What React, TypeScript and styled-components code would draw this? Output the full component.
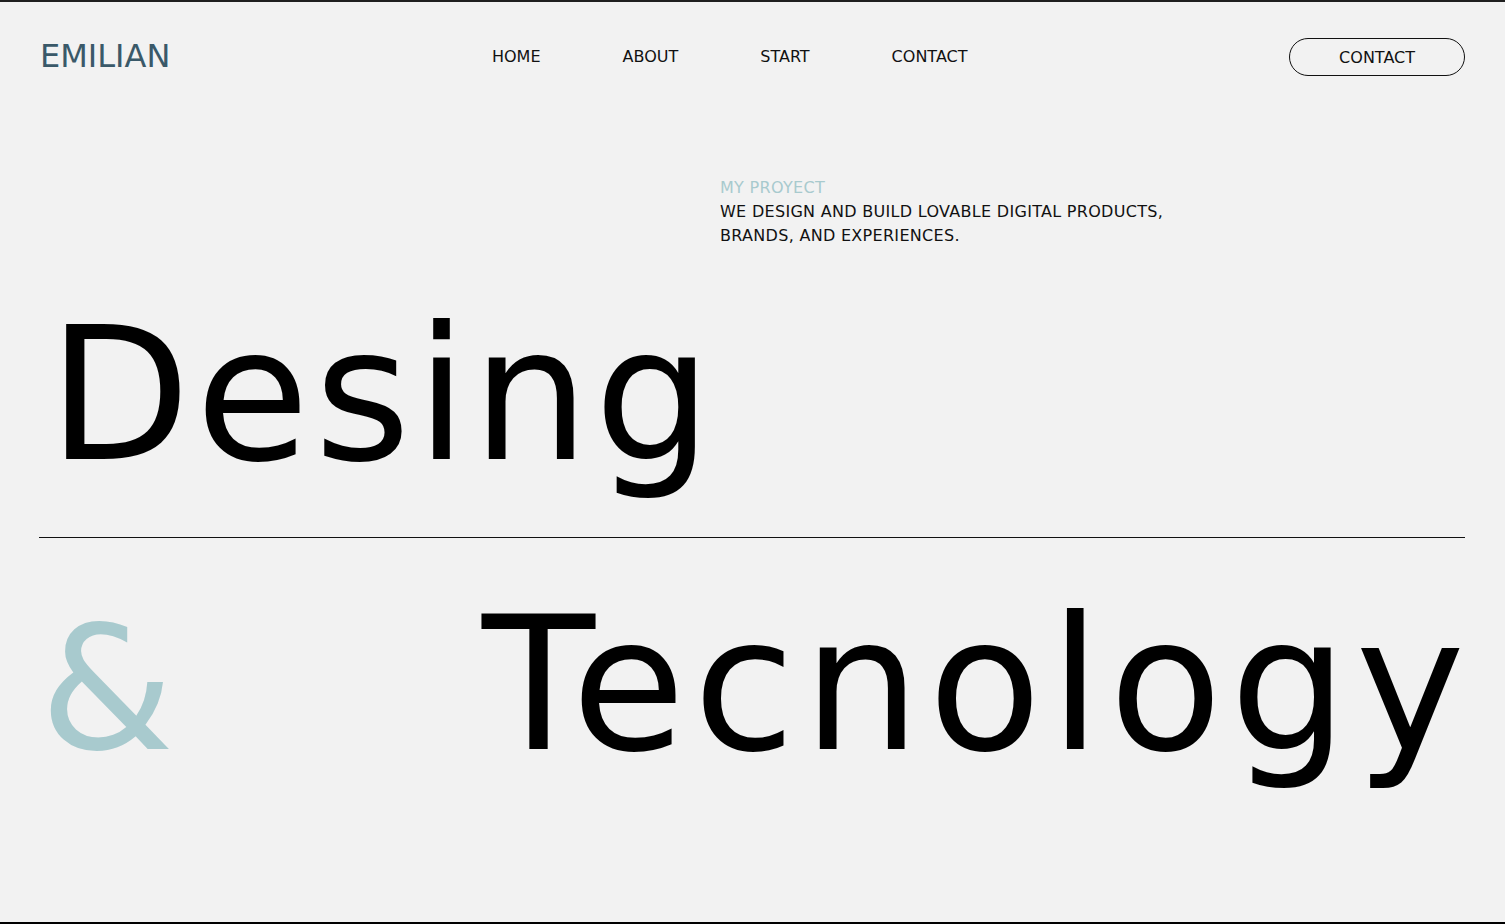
import React from "react";
import styled, { createGlobalStyle } from "styled-components";

const Global = createGlobalStyle`
  html, body {
    margin: 0;
    padding: 0;
    background: #f2f2f2;
  }
  * { box-sizing: border-box; }
  body {
    font-family: "DejaVu Sans", "Liberation Sans", sans-serif;
    color: #111;
  }
`;

const Page = styled.div`
  min-height: 100vh;
  border-top: 2px solid #1f1f1f;
  border-bottom: 2px solid #000;
  background: #f2f2f2;
  display: flex;
  flex-direction: column;
`;

const Header = styled.header`
  display: flex;
  justify-content: space-between;
  align-items: center;
  padding: 36px 40px 0;
`;

const Logo = styled.div`
  font-size: 32px;
  line-height: 1;
  color: #3a5969;
  margin-top: -3px;
`;

const Nav = styled.nav`
  display: flex;
  gap: 82px;
`;

const NavLink = styled.a`
  font-size: 16px;
  color: #111;
  text-decoration: none;
  line-height: 20px;
`;

const PillButton = styled.button`
  height: 38px;
  padding: 0 49px;
  border: 1px solid #111;
  border-radius: 999px;
  background: transparent;
  font-family: inherit;
  font-size: 16px;
  color: #111;
  cursor: pointer;
`;

const Main = styled.main`
  padding: 0 40px;
  display: flex;
  flex-direction: column;
`;

const Intro = styled.div`
  margin: 100px 0 0 680px;
  font-size: 16px;
  line-height: 24px;
  letter-spacing: 0.3px;
`;

const Kicker = styled.div`
  color: #a8cace;
`;

const Lead = styled.p`
  margin: 0;
  color: #111;
`;

const Title = styled.h1`
  margin: 52px 0 0;
  padding-left: 8px;
  font-size: 185px;
  line-height: 190px;
  font-weight: 400;
  letter-spacing: 5px;
  color: #000;
`;

const Divider = styled.hr`
  margin: 47px 0 0 -1px;
  border: none;
  border-top: 1px solid #111;
  height: 0;
`;

const BottomRow = styled.div`
  margin-top: 52px;
  display: flex;
  justify-content: space-between;
  align-items: baseline;
  line-height: 190px;
`;

const Amp = styled.span<{ $tone: string }>`
  color: ${(p) => p.$tone};
  font-size: 172px;
`;

const Word = styled.span`
  color: #000;
  font-size: 185px;
  letter-spacing: 8px;
  margin-right: -8px;
`;

export default function App() {
  return (
    <>
      <Global />
      <Page>
        <Header>
          <Logo>EMILIAN</Logo>
          <Nav>
            <NavLink href="#">HOME</NavLink>
            <NavLink href="#">ABOUT</NavLink>
            <NavLink href="#">START</NavLink>
            <NavLink href="#">CONTACT</NavLink>
          </Nav>
          <PillButton>CONTACT</PillButton>
        </Header>
        <Main>
          <Intro>
            <Kicker>MY PROYECT</Kicker>
            <Lead>
              WE DESIGN AND BUILD LOVABLE DIGITAL PRODUCTS,
              <br />
              BRANDS, AND EXPERIENCES.
            </Lead>
          </Intro>
          <Title>Desing</Title>
          <Divider />
          <BottomRow>
            <Amp $tone="#a8cace">&amp;</Amp>
            <Word>Tecnology</Word>
          </BottomRow>
        </Main>
      </Page>
    </>
  );
}
